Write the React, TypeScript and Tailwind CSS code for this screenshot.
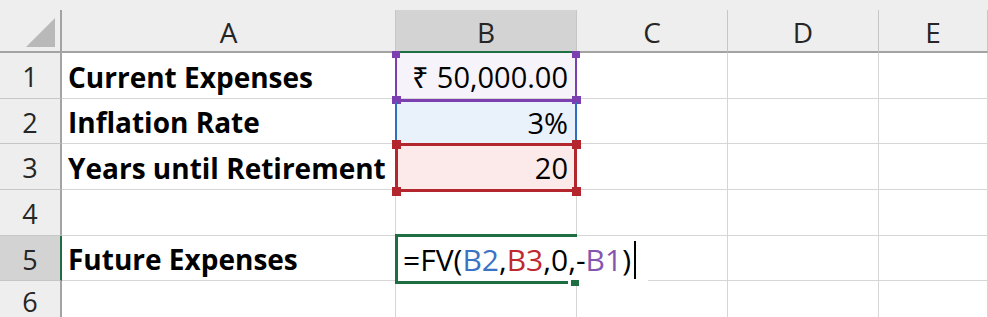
import React from "react";

const font = { fontFamily: '"Open Sans", "Liberation Sans", sans-serif' };

function Hdr({ children, active }: { children?: React.ReactNode; active?: boolean }) {
  return (
    <div
      className={
        active
          ? "flex items-center justify-center bg-[#d3d3d3] border-r border-[#c6c6c6] border-b-2 border-b-[#1f6e43] text-[28px] text-[#262626] leading-none pt-[2px]"
          : "flex items-center justify-center bg-[#eeeeee] border-r border-[#c6c6c6] border-b-2 border-b-[#a3a3a3] text-[28px] text-[#262626] leading-none pt-[2px]"
      }
    >
      {children}
    </div>
  );
}

function RowHdr({ n, active }: { n: number; active?: boolean }) {
  return (
    <div
      className={
        active
          ? "flex items-center justify-center bg-[#d3d3d3] border-b border-[#c6c6c6] border-r-2 border-r-[#1f6e43] text-[27px] text-[#262626] leading-none pt-[2px]"
          : "flex items-center justify-center bg-[#eeeeee] border-b border-[#c6c6c6] border-r-2 border-r-[#a3a3a3] text-[27px] text-[#262626] leading-none pt-[2px]"
      }
    >
      {n}
    </div>
  );
}

function Cell({ children, right, bold, bg }: { children?: React.ReactNode; right?: boolean; bold?: boolean; bg?: string }) {
  return (
    <div
      className={
        (right ? "justify-end pr-[8px] text-[29px] " : "justify-start pl-[6px] ") +
        (bold ? "font-bold text-[28px] " : "") +
        "flex items-center border-r border-b border-[#d6d6d6] text-black leading-none whitespace-nowrap pt-[2px] " +
        (bg ?? "")
      }
    >
      {children}
    </div>
  );
}

export default function App() {
  return (
    <div className="relative w-[988px] h-[317px] overflow-hidden bg-white" style={font}>
      <div className="h-[10px] bg-[#eeeeee]" />
      <div className="grid grid-cols-[62px_334px_181px_151px_151px_1fr] grid-rows-[43px_46px_45px_46px_46px_45px_40px]">
        {/* header row */}
        <div className="relative bg-[#eeeeee] border-r-2 border-r-[#a3a3a3] border-b-2 border-b-[#a3a3a3]">
          <svg className="absolute left-[26px] top-[8px]" width="30" height="30" viewBox="0 0 30 30">
            <polygon points="29,0 29,29 0,29" fill="#b9b9b9" />
          </svg>
        </div>
        <Hdr>A</Hdr>
        <Hdr active>B</Hdr>
        <Hdr>C</Hdr>
        <Hdr>D</Hdr>
        <Hdr>E</Hdr>

        <RowHdr n={1} />
        <Cell bold>Current Expenses</Cell>
        <Cell right bg="bg-[#f7f3fb]">₹ 50,000.00</Cell>
        <Cell />
        <Cell />
        <Cell />

        <RowHdr n={2} />
        <Cell bold>Inflation Rate</Cell>
        <Cell right bg="bg-[#e9f1fb]">3%</Cell>
        <Cell />
        <Cell />
        <Cell />

        <RowHdr n={3} />
        <Cell bold>Years until Retirement</Cell>
        <Cell right bg="bg-[#fce9ea]">20</Cell>
        <Cell />
        <Cell />
        <Cell />

        <RowHdr n={4} />
        <Cell />
        <Cell />
        <Cell />
        <Cell />
        <Cell />

        <RowHdr n={5} active />
        <Cell bold>Future Expenses</Cell>
        <Cell />
        <Cell />
        <Cell />
        <Cell />

        <RowHdr n={6} />
        <Cell />
        <Cell />
        <Cell />
        <Cell />
        <Cell />
      </div>

      {/* B1 purple reference box */}
      <div className="absolute left-[395px] top-[53px] w-[182px] h-[49px] border-l-2 border-r-2 border-b-[3px] border-[#7b3fb0]" />
      <div className="absolute left-[392px] top-[51px] w-[8px] h-[7px] bg-[#7b3fb0]" />
      <div className="absolute left-[572px] top-[51px] w-[8px] h-[7px] bg-[#7b3fb0]" />
      <div className="absolute left-[392px] top-[96px] w-[9px] h-[8px] bg-[#7b3fb0]" />
      <div className="absolute left-[572px] top-[96px] w-[9px] h-[8px] bg-[#7b3fb0]" />

      {/* B2 blue reference box */}
      <div className="absolute left-[395px] top-[102px] w-[182px] h-[41px] border-l-2 border-r-2 border-[#2e6fc0]" />

      {/* B3 red reference box */}
      <div className="absolute left-[395px] top-[143px] w-[182px] h-[49px] border-l-[3px] border-r-[3px] border-t-[3px] border-b-[3px] border-[#b3262d]" />
      <div className="absolute left-[392px] top-[140px] w-[9px] h-[9px] bg-[#b3262d]" />
      <div className="absolute left-[572px] top-[140px] w-[9px] h-[9px] bg-[#b3262d]" />
      <div className="absolute left-[392px] top-[187px] w-[9px] h-[9px] bg-[#b3262d]" />
      <div className="absolute left-[572px] top-[187px] w-[9px] h-[9px] bg-[#b3262d]" />

      {/* B5 editing cell */}
      <div className="absolute left-[398px] top-[237px] w-[250px] h-[44px] bg-white flex items-center pl-[5px] pt-[2px] text-[30px] leading-none whitespace-nowrap text-black">
        <span>=FV(</span>
        <span className="text-[#3a73c6]">B2</span>
        <span>,</span>
        <span className="text-[#c0282f]">B3</span>
        <span>,0,-</span>
        <span className="text-[#8456b0]">B1</span>
        <span>)</span>
        <span className="ml-[3px] inline-block w-[2px] h-[38px] bg-black" />
      </div>
      <div className="absolute left-[395px] top-[234px] w-[182px] h-[3px] bg-[#1f6e43]" />
      <div className="absolute left-[395px] top-[234px] w-[3px] h-[50px] bg-[#1f6e43]" />
      <div className="absolute left-[395px] top-[281px] w-[173px] h-[3px] bg-[#1f6e43]" />
      <div className="absolute left-[571px] top-[280px] w-[8px] h-[6px] bg-[#1f6e43]" />
    </div>
  );
}
